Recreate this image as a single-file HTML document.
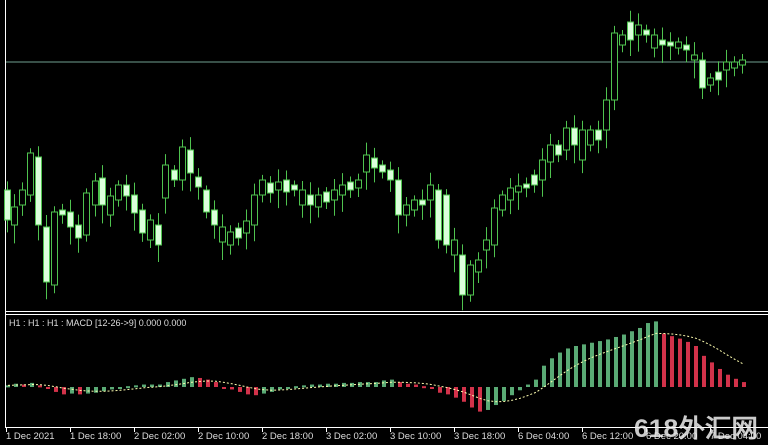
<!DOCTYPE html>
<html><head><meta charset="utf-8"><style>
html,body{margin:0;padding:0;background:#000;width:768px;height:445px;overflow:hidden}
svg{display:block}
text{font-family:"Liberation Sans","DejaVu Sans",sans-serif}
</style></head><body>
<svg id="s" width="768" height="445" xmlns="http://www.w3.org/2000/svg">
<rect width="768" height="445" fill="#000"/>
<line x1="5" y1="62" x2="768" y2="62" stroke="#6f9f8f" stroke-width="1"/>
<line x1="5.5" y1="0" x2="5.5" y2="428" stroke="#fff"/>
<line x1="5" y1="311.5" x2="768" y2="311.5" stroke="#fff"/>
<line x1="5" y1="314.5" x2="768" y2="314.5" stroke="#fff"/>
<line x1="5" y1="427.5" x2="768" y2="427.5" stroke="#fff"/>
<g id="c"></g><g id="m"></g>
<text x="9" y="326" fill="#ddd" font-size="9">H1 : H1 : H1 :  MACD [12-26-&gt;9] 0.000 0.000</text>
<g fill="#ddd" font-size="9.5" id="ax">
<text x="6" y="439">1 Dec 2021</text><text x="70" y="439">1 Dec 18:00</text><text x="134" y="439">2 Dec 02:00</text><text x="198" y="439">2 Dec 10:00</text><text x="262" y="439">2 Dec 18:00</text><text x="326" y="439">3 Dec 02:00</text><text x="390" y="439">3 Dec 10:00</text><text x="454" y="439">3 Dec 18:00</text><text x="518" y="439">6 Dec 04:00</text><text x="582" y="439">6 Dec 12:00</text><text x="646" y="439">6 Dec 20:00</text><text x="710" y="439">7 Dec 04:00</text>
</g>
<g stroke="#fff" id="tk"></g>
<text x="634" y="437" fill="#eee" fill-opacity="0.85" font-size="25" font-weight="bold" textLength="124" lengthAdjust="spacingAndGlyphs" font-family="'Liberation Sans','Noto Sans CJK SC',sans-serif">618外汇网</text>
</svg>
<script>
var C=[[7,190,220,1],[14,207,225,0],[22,190,205,0],[30,153,195,0],[38,157,225,1],[46,227,282,1],[54,212,285,0],[62,210,215,1],[70,212,227,1],[78,225,238,1],[86,193,235,0],[95,181,205,0],[102,178,205,1],[110,196,215,0],[118,185,200,0],[126,185,196,1],[134,195,213,1],[142,210,233,1],[150,220,240,0],[158,225,245,1],[165,165,198,0],[174,170,180,1],[182,147,180,0],[190,150,173,1],[198,177,187,1],[206,190,212,1],[214,210,225,1],[222,227,242,0],[230,232,245,0],[238,228,238,1],[246,221,233,0],[254,195,225,0],[262,180,195,0],[270,183,193,1],[278,182,190,0],[286,180,192,1],[294,185,190,1],[302,190,205,0],[310,195,205,1],[318,195,207,0],[326,192,202,1],[334,190,200,0],[342,185,195,0],[350,182,190,1],[358,180,188,0],[366,155,172,0],[374,158,168,1],[382,165,172,1],[390,170,180,1],[398,180,215,1],[406,205,215,0],[414,200,210,0],[422,200,205,1],[430,185,200,0],[438,190,240,1],[446,195,245,1],[454,240,255,0],[462,255,295,1],[470,265,295,0],[478,260,272,0],[486,240,250,0],[494,208,245,0],[502,195,210,0],[510,188,200,0],[518,186,192,0],[526,184,188,1],[534,175,185,1],[542,160,180,0],[550,145,162,0],[558,145,155,1],[566,128,150,0],[574,128,145,1],[582,130,160,0],[590,130,145,0],[598,130,140,1],[606,100,130,0],[614,33,100,0],[622,35,45,0],[630,22,40,1],[638,25,35,0],[646,30,35,1],[654,35,48,0],[662,40,45,1],[670,42,46,1],[678,42,48,0],[686,45,50,1],[694,55,60,0],[702,60,88,1],[710,78,85,0],[718,72,80,1],[726,62,70,0],[734,62,68,0],[742,60,65,0]];
var h='';C.forEach(function(c,i){var t=c[1],b=c[2],w=(Math.sin(i*1.7)+1.4)*6+4;
h+='<line x1="'+(c[0]+.5)+'" y1="'+(t-w*0.7)+'" x2="'+(c[0]+.5)+'" y2="'+(b+w)+'" stroke="#4fc34f"/>';
h+='<rect x="'+(c[0]-2.5)+'" y="'+t+'" width="6" height="'+Math.max(2,b-t)+'" fill="'+(c[3]?'#dcffdc':'#000')+'" stroke="#4fc34f"/>';});
document.getElementById('c').innerHTML=h;
var Z=387,K=0.82,M=[2,4,3,5,2,-2,-6,-8,-9,-8,-9,-8,-7,-5,-3,-2,-1,1,2,3,3,3,5,6,8,10,12,11,9,6,3,0,-3,-6,-9,-10,-8,-6,-5,-3,-1,1,2,3,3,4,4,4,5,5,6,6,6,7,8,9,6,4,3,1,-2,-5,-7,-9,-13,-18,-25,-30,-33,-28,-22,-17,-10,-4,3,9,17,26,35,42,47,50,52,54,55,56,58,61,64,68,72,75,78,80,65,62,59,55,50,45,38,30,22,15,10,6,3];
var m='',N=93;for(var i=0;i<N;i++){var x=8+i*8,v=(M[Math.floor(i*M.length/N)]||0)*K,pv=i?(M[Math.floor((i-1)*M.length/N)]||0)*K:0;
var col=v>=pv?'#5aaa75':'#d2324a';var y=Z-v;m+='<rect x="'+(x-2)+'" y="'+Math.min(y,Z)+'" width="4" height="'+Math.max(2,Math.abs(v))+'" fill="'+col+'"/>';}
var sp=[];var s=0;for(var i=0;i<N;i++){var v=(M[Math.floor(i*M.length/N)]||0)*K;s=i?s+(v-s)*0.2:v;sp.push((8+i*8)+','+(Z-s).toFixed(1));}
m+='<polyline points="'+sp.join(' ')+'" fill="none" stroke="#ffffb0" stroke-width="1" stroke-dasharray="2,2"/>';
document.getElementById('m').innerHTML=m;
var t='';for(var k=0;k<12;k++){var x=6.5+k*64;t+='<line x1="'+x+'" y1="428" x2="'+x+'" y2="432"/>';}document.getElementById('tk').innerHTML=t;
</script>
</body></html>
